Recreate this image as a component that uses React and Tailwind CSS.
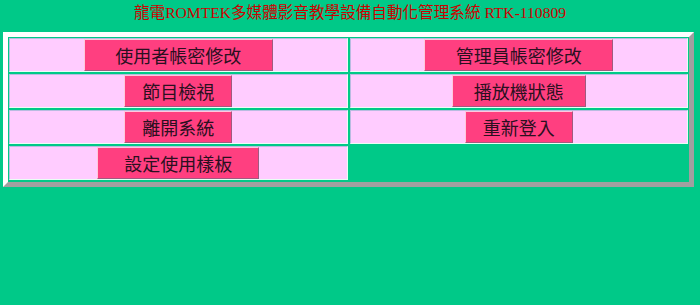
import React from "react";

const cells = [
  { label: "使用者帳密修改", w: "w-[189px]" },
  { label: "管理員帳密修改", w: "w-[189px]" },
  { label: "節目檢視", w: "w-[108px]" },
  { label: "播放機狀態", w: "w-[134px]" },
  { label: "離開系統", w: "w-[108px]" },
  { label: "重新登入", w: "w-[108px]" },
  { label: "設定使用樣板", w: "w-[162px]" },
];

const App = () => {
  return (
    <div className="min-h-screen w-full bg-[#00c988] font-['Liberation_Serif','Noto_Sans_CJK_TC',serif]">
      <div className="pt-[2px] text-center text-[15.6px] leading-[22px] text-[#cc0000]">
        龍電ROMTEK多媒體影音教學設備自動化管理系統 RTK-110809
      </div>
      <div className="mt-[8px] ml-[3px] w-[691px] border-[5px] border-t-white border-l-white border-r-[#a0a0a0] border-b-[#a0a0a0]">
        <div className="grid grid-cols-2 gap-[2px] pt-[1px] pb-[2px] px-[1px]">
          {cells.map((c) => (
            <div
              key={c.label}
              className="flex h-[34px] items-center justify-center border border-t-[#b8bce0] border-l-[#b8bce0] border-r-[#e8fff4] border-b-[#e8fff4] bg-[#ffccff]"
            >
              <button
                className={`${c.w} h-[32px] border border-t-[#ffc8dc] border-l-[#ffc8dc] border-r-[#a05a80] border-b-[#a05a80] bg-[#ff3f80] font-['Noto_Sans_CJK_TC',sans-serif] text-[18px] leading-[30px] text-[#2a1020]`}
              >
                {c.label}
              </button>
            </div>
          ))}
        </div>
      </div>
    </div>
  );
};

export default App;
